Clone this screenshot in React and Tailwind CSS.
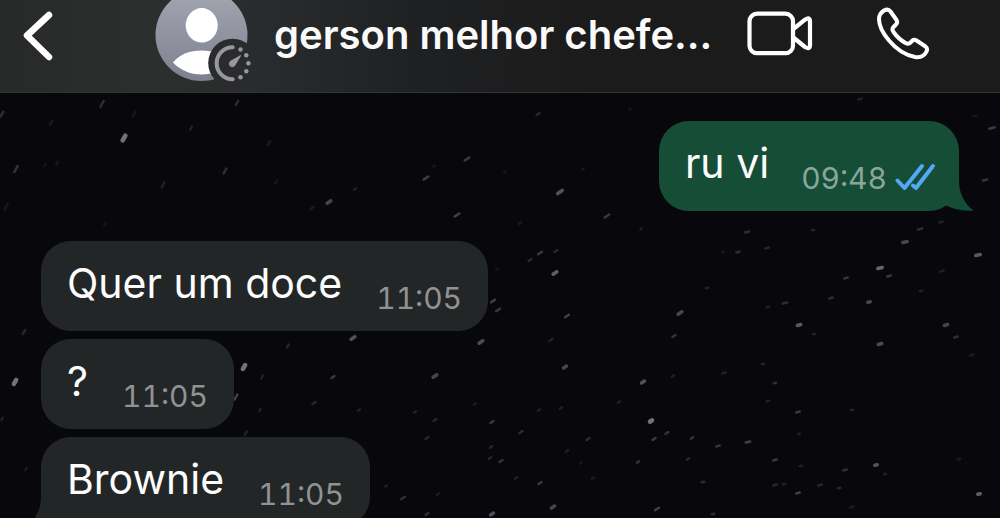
import React from "react";

// Each streak: x, y, length, opacity
const STREAKS = [
  [124, 45, 10, 0.85], [16, 76, 9, 0.35], [102, 11, 9, 0.3], [237, 10, 7, 0.3], [51, 30, 7, 0.15],
  [2, 21, 8, 0.3], [191, 35, 6, 0.2], [269, 50, 7, 0.15], [225, 78, 8, 0.3], [163, 92, 8, 0.2],
  [57, 70, 6, 0.12], [45, 72, 5, 0.1], [6, 114, 10, 0.12], [312, 115, 6, 0.15], [329, 109, 8, 0.5],
  [134, 21, 8, 0.12], [276, 89, 6, 0.1], [105, 131, 6, 0.1], [355, 96, 5, 0.2], [426, 85, 8, 0.45],
  [434, 73, 4, 0.12], [467, 66, 8, 0.4], [538, 21, 6, 0.25], [457, 122, 8, 0.45], [560, 99, 9, 0.6],
  [607, 123, 8, 0.4], [641, 136, 4, 0.2], [520, 130, 5, 0.15], [583, 76, 4, 0.15], [505, 79, 5, 0.1],
  [540, 160, 7, 0.4], [530, 167, 6, 0.25], [556, 158, 6, 0.25], [555, 180, 8, 0.7], [497, 176, 5, 0.1],
  [493, 208, 7, 0.45], [498, 217, 7, 0.4], [567, 223, 7, 0.45], [481, 249, 8, 0.55], [551, 247, 6, 0.2],
  [680, 220, 8, 0.5], [674, 243, 6, 0.35], [565, 274, 7, 0.5], [435, 283, 8, 0.5], [643, 289, 7, 0.6],
  [673, 283, 5, 0.2], [619, 309, 5, 0.2], [651, 328, 7, 0.85], [667, 340, 6, 0.35], [654, 346, 6, 0.4],
  [692, 345, 5, 0.35], [415, 319, 5, 0.2], [435, 327, 6, 0.25], [427, 345, 6, 0.25], [492, 329, 6, 0.4],
  [521, 339, 6, 0.3], [539, 317, 5, 0.2], [561, 315, 5, 0.2], [588, 346, 6, 0.3], [567, 358, 5, 0.2],
  [491, 354, 5, 0.25], [490, 365, 5, 0.25], [501, 368, 6, 0.35], [581, 370, 4, 0.15], [638, 369, 5, 0.35],
  [688, 366, 5, 0.25], [540, 390, 6, 0.4], [516, 385, 5, 0.2], [593, 385, 5, 0.15], [403, 405, 7, 0.3],
  [438, 401, 5, 0.15], [427, 421, 6, 0.3], [492, 421, 7, 0.55], [553, 414, 7, 0.5], [657, 416, 7, 0.45],
  [475, 311, 5, 0.15], [747, 139, 7, 0.3], [813, 137, 5, 0.2], [738, 159, 6, 0.3], [767, 155, 6, 0.25],
  [723, 159, 4, 0.15], [707, 195, 5, 0.2], [846, 185, 6, 0.35], [880, 175, 8, 0.75], [889, 183, 6, 0.4],
  [905, 149, 8, 0.5], [920, 136, 7, 0.3], [941, 129, 6, 0.2], [978, 162, 8, 0.65], [942, 178, 6, 0.2],
  [921, 198, 5, 0.2], [785, 210, 7, 0.3], [768, 214, 5, 0.2], [831, 205, 6, 0.3], [869, 209, 6, 0.5],
  [799, 232, 7, 0.65], [814, 241, 5, 0.2], [946, 232, 7, 0.5], [956, 244, 6, 0.3], [880, 251, 7, 0.55],
  [972, 262, 6, 0.15], [763, 271, 5, 0.2], [724, 280, 6, 0.2], [775, 290, 5, 0.3], [768, 308, 5, 0.2],
  [798, 319, 6, 0.4], [852, 317, 5, 0.2], [748, 349, 7, 0.45], [718, 353, 6, 0.35], [799, 341, 4, 0.2],
  [775, 367, 6, 0.4], [801, 373, 5, 0.2], [845, 377, 6, 0.3], [876, 372, 6, 0.6], [885, 381, 4, 0.2],
  [775, 392, 6, 0.25], [784, 391, 5, 0.2], [820, 392, 6, 0.25], [839, 395, 5, 0.25], [798, 400, 6, 0.45],
  [979, 401, 6, 0.7], [713, 421, 5, 0.3], [852, 414, 6, 0.15], [959, 366, 5, 0.15], [703, 389, 5, 0.3],
  [15, 289, 9, 0.85], [244, 274, 9, 0.85], [353, 245, 8, 0.6], [236, 304, 8, 0.45], [288, 253, 6, 0.25],
  [262, 284, 6, 0.2], [333, 284, 6, 0.4], [314, 310, 6, 0.25], [260, 317, 5, 0.2], [359, 317, 5, 0.2],
  [246, 340, 7, 0.2], [24, 239, 7, 0.25], [386, 393, 4, 0.2], [2, 326, 5, 0.2], [26, 376, 5, 0.15],
  [975, 23, 6, 0.1], [992, 35, 8, 0.4], [985, 87, 7, 0.35], [630, 16, 5, 0.1], [860, 6, 6, 0.2],
];

function Starfield() {
  return (
    <svg
      aria-hidden="true"
      viewBox="0 0 1000 425"
      preserveAspectRatio="xMinYMin slice"
      className="absolute inset-0 h-full w-full"
      fill="none"
      stroke="#c9c8d2"
      strokeLinecap="round"
    >
      {STREAKS.map(([x, y, len, o]) => {
        const angle = x < 300 ? 1.05 : x < 700 ? 0.6 : 0.25;
        const width = o > 0.8 ? 4.5 : o > 0.45 ? 3.5 : 2.5;
        const r = (len - width) / 2;
        const dx = r * Math.cos(angle);
        const dy = r * Math.sin(angle);
        return (
          <line
            key={`${x}-${y}`}
            x1={x - dx}
            y1={y + dy}
            x2={x + dx}
            y2={y - dy}
            strokeWidth={width}
            strokeOpacity={o * 0.65}
          />
        );
      })}
    </svg>
  );
}

function Avatar() {
  return (
    <svg viewBox="0 0 97 84" className="block h-[84px] w-[97px]" aria-hidden="true">
      <defs>
        <linearGradient id="avatarFill" x1="0" y1="0" x2="0" y2="1">
          <stop offset="0" stopColor="#a4a7b2" />
          <stop offset="1" stopColor="#7e818d" />
        </linearGradient>
      </defs>
      <circle cx="46.5" cy="35" r="46" fill="url(#avatarFill)" />
      <ellipse cx="46.7" cy="25.3" rx="16" ry="17.2" fill="#fff" />
      <path d="M18 62.500C25 54 35 50.500 46.500 50.500S68 54 75 62.500C68 70 58 74.500 46.500 74.500S25 70 18 62.500Z" fill="#fff" />
      <circle cx="77.500" cy="63" r="24.300" fill="#2a2b2c" />
      <path d="M77.700 47.200A16 16 0 0 0 77.700 79.300" strokeWidth="4" fill="none" stroke="#98989a" strokeLinecap="round" />
      <path d="M85.600 55.600L80 65A3 3 0 1 1 76 61Z" fill="#98989a" stroke="#98989a" strokeWidth="1" strokeLinejoin="round" />
      <g fill="#98989a">
        <circle cx="85.500" cy="49.500" r="2.200" />
        <circle cx="91.300" cy="55.300" r="2.200" />
        <circle cx="93.400" cy="63.200" r="2.200" />
        <circle cx="91.300" cy="71.200" r="2.200" />
        <circle cx="85.500" cy="77.200" r="2.200" />
      </g>
    </svg>
  );
}

function Header() {
  return (
    <header className="relative flex shrink-0 items-start border-b border-[#343536] bg-[linear-gradient(90deg,#282a2a_0%,#2d2f2e_16%,#292b2c_26%,#1f2021_42%,#1b1b1c_60%,#1b1b1c_100%)] pr-[69px] pb-2 pl-[22px]">
      <button type="button" aria-label="Voltar" className="mt-[10px] mr-[101px] shrink-0">
        <svg viewBox="0 0 32 52" className="block h-[52px] w-8" fill="none" stroke="#fff" strokeWidth="6.500" strokeLinecap="round" strokeLinejoin="round">
          <path d="M27 5L5 25.500L27 47" />
        </svg>
      </button>
      <div className="mr-[22px] shrink-0">
        <Avatar />
      </div>
      <h1 className="min-w-0 flex-1 truncate pt-[11px] text-[40px] leading-[48px] font-semibold text-[#fafafa]">
        gerson melhor chefe...
      </h1>
      <button type="button" aria-label="Chamada de vídeo" className="mt-2 mr-[61px] shrink-0">
        <svg viewBox="0 0 68 50" className="block h-[50px] w-[68px]" fill="none" stroke="#fff" strokeWidth="4.200" strokeLinecap="round" strokeLinejoin="round">
          <rect x="3.500" y="5.700" width="43.500" height="39.500" rx="7.500" />
          <path d="M48 20.500L59 11.700Q64 8.500 64 13.500V37Q64 42 59 39L48 30" />
        </svg>
      </button>
      <button type="button" aria-label="Ligar" className="mt-[6px] shrink-0">
        <svg viewBox="0 0 56 56" className="block h-14 w-14" fill="none" stroke="#fff" strokeWidth="4" strokeLinecap="round" strokeLinejoin="round">
          <path d="M9 4.500C12 3 14 3.500 15.500 5.500L21.500 14Q23 16.500 21 18.500L18.500 21Q16.500 23 18.500 26Q23.500 33 30.500 37Q33.500 38.500 35.500 36.500L37.500 34.500Q39 33 41.500 34.500L50.500 40.500Q53 42.500 51.500 45.500C49.500 50 45 51.700 40 51C32 49.500 22 44 14 34.500C8 27.500 4 19.500 4 13C4 9.500 6 6.500 9 4.500Z" />
        </svg>
      </button>
    </header>
  );
}

function ReadTicks() {
  return (
    <svg viewBox="0 0 40 28" className="mb-[3px] ml-2 block h-7 w-10" fill="none" stroke="#53a9f5" strokeWidth="4" strokeLinecap="round" strokeLinejoin="round" role="img" aria-label="Lida">
      <path d="M2.500 17.500L9.500 25L27 3" />
      <path d="M18 22.500L21 25L38 3" />
    </svg>
  );
}

function Bubble({ text, time, mine = false, tail = false }) {
  return (
    <li
      className={
        mine
          ? "relative mb-[22px] flex items-end self-end rounded-[30px] bg-[#154d37] pt-4 pb-[17px] pr-6 pl-[26px]"
          : "relative flex items-end rounded-[30px] bg-[#232627] pt-4 pb-[17px] pr-[26px] pl-[26px]"
      }
    >
      {tail && (
        <svg
          aria-hidden="true"
          viewBox="0 0 40 44"
          className={
            mine
              ? "absolute -right-[15px] bottom-0 h-11 w-10 fill-[#154d37]"
              : "absolute bottom-0 -left-[15px] h-11 w-10 -scale-x-100 fill-[#232627]"
          }
        >
          <path d="M0 0H25V14C25 27 31 37 39.500 43.500C30 44.500 19 42 12 38.500L0 30Z" />
        </svg>
      )}
      <p className="relative mb-[5px] text-[41px] leading-[52px] text-[#fcfcfc]">{text}</p>
      <time
        className={
          mine
            ? "relative ml-8 text-[30px] leading-8 tabular-nums text-[#8aa69b]"
            : "relative ml-[34px] text-[30px] leading-8 tabular-nums text-[#919293]"
        }
      >
        {time}
      </time>
      {mine && <ReadTicks />}
    </li>
  );
}

export default function App() {
  return (
    <div className="flex h-screen flex-col overflow-hidden bg-[#08080c] font-['Inter','Liberation_Sans',sans-serif]">
      <Header />
      <main className="relative min-h-0 flex-1 overflow-hidden">
        <Starfield />
        <ul className="relative flex flex-col items-start gap-2 pt-7 pr-[41px] pl-[41px]">
          <Bubble text="ru vi" time="09:48" mine tail />
          <Bubble text="Quer um doce" time="11:05" />
          <Bubble text="?" time="11:05" />
          <Bubble text="Brownie" time="11:05" tail />
        </ul>
      </main>
    </div>
  );
}
